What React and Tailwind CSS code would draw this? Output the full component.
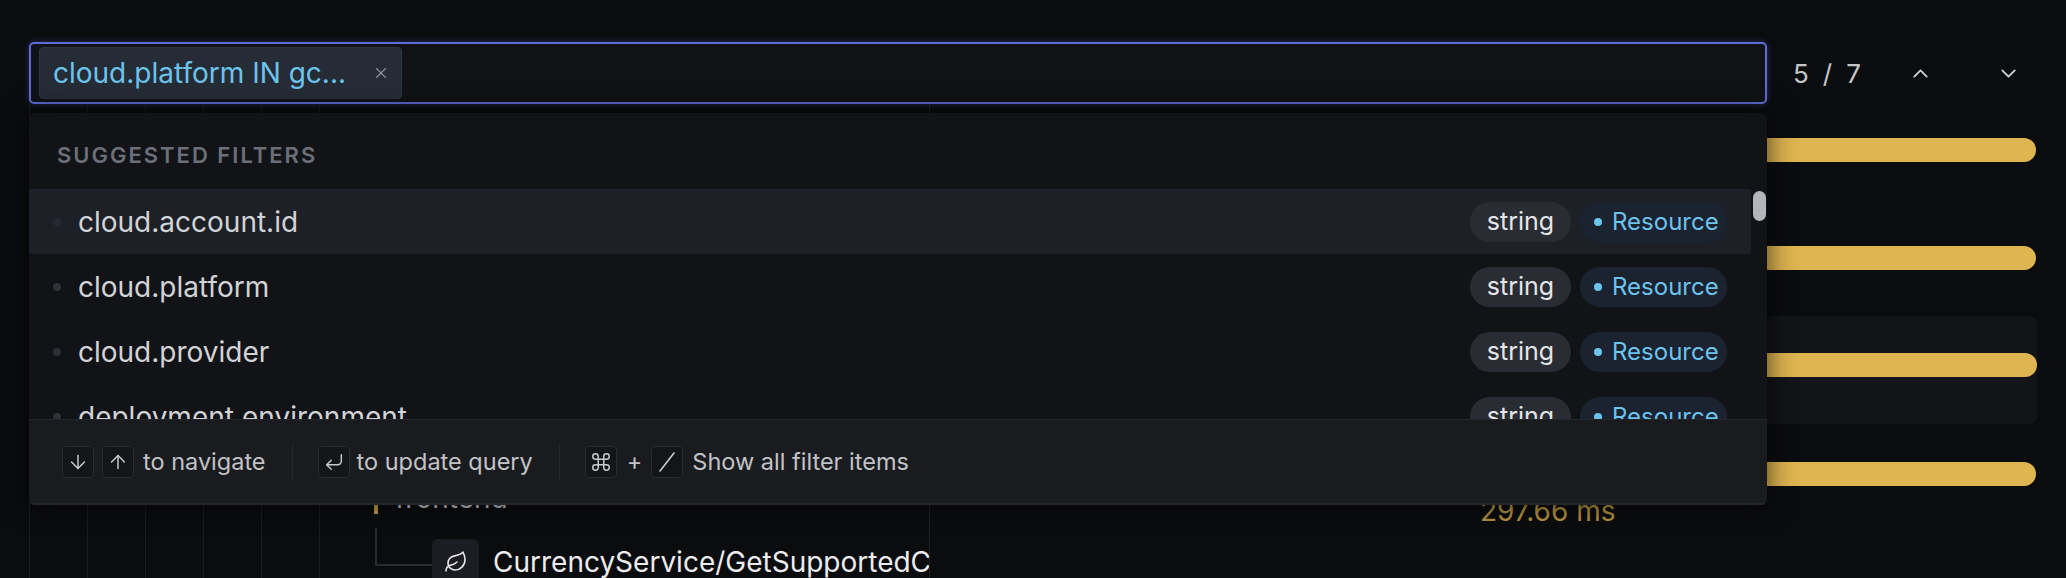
import { ArrowDown, ArrowUp, ChevronDown, ChevronUp, Command, CornerDownLeft, Leaf, X } from "lucide-react";

const suggestions = [
  { key: "cloud.account.id", type: "string", tag: "Resource" },
  { key: "cloud.platform", type: "string", tag: "Resource" },
  { key: "cloud.provider", type: "string", tag: "Resource" },
  { key: "deployment.environment", type: "string", tag: "Resource" },
];

function Kbd({ children }) {
  return (
    <span className="flex h-[32px] w-[32px] items-center justify-center rounded-[4px] border border-[#2a2b31] bg-[#141519] text-[#c9cacf]">
      {children}
    </span>
  );
}

function SlashIcon() {
  return (
    <svg width="24" height="24" viewBox="0 0 24 24" fill="none" stroke="currentColor" strokeWidth="1.6" strokeLinecap="round">
      <path d="M5 21 L19 3" />
    </svg>
  );
}

function Bar() {
  return <div className="ml-[550px] mr-[30px] h-[24px] rounded-full bg-[#deb550]" />;
}

export default function App() {
  return (
    <div className="relative flex h-[578px] w-[2066px] flex-col overflow-hidden bg-[#0b0c0e] font-['Inter',sans-serif]">
      {/* Search bar */}
      <div className="mt-[42px] flex h-[62px] items-center pl-[29px]">
        <div className="flex h-[62px] w-[1738px] items-center rounded-[5px] border-2 border-[#5d6cd6] bg-[#111216] pl-[8px] shadow-[0_0_6px_rgba(93,108,214,0.35)]">
          <div className="flex h-[52px] w-[363px] items-center rounded-[4px] border border-[#2e3440] bg-[#262c36] pl-[13px]">
            <span className="text-[28px] leading-none text-[#6cc3ec]">cloud.platform IN gc...</span>
            <X className="ml-[26px] text-[#8d929c]" size={18} strokeWidth={1.5} />
          </div>
        </div>
        <div className="ml-[26px] flex items-center gap-[14px] text-[26px] text-[#c4c5c9]">
          <span>5</span>
          <span>/</span>
          <span>7</span>
        </div>
        <ChevronUp className="ml-[47px] text-[#d2d3d7]" size={25} strokeWidth={1.7} />
        <ChevronDown className="ml-[63px] text-[#d2d3d7]" size={25} strokeWidth={1.7} />
      </div>

      {/* Trace view underneath */}
      <div className="flex flex-1">
        <div className="flex w-[930px] flex-col border-r border-[#1f2025]">
          <div className="flex flex-1 overflow-hidden">
            <div className="ml-[29px] flex">
              <div className="w-[58px] border-l border-[#1b1c21]" />
              <div className="w-[58px] border-l border-[#1b1c21]" />
              <div className="w-[58px] border-l border-[#1b1c21]" />
              <div className="w-[58px] border-l border-[#1b1c21]" />
              <div className="w-[58px] border-l border-[#1b1c21]" />
              <div className="w-[55px] border-l border-[#1b1c21]" />
            </div>
            <div className="flex flex-col pt-[374px]">
              <div className="flex h-[40px] items-center">
                <div className="h-[32px] w-[4px] bg-[#c9a244]" />
                <span className="ml-[17px] text-[28px] text-[#c8c9cd]">frontend</span>
              </div>
              <div className="flex items-start">
                <div className="ml-[1px] mt-[10px] h-[38px] w-[57px] border-b-2 border-l-2 border-[#2a2b31]" />
                <div className="mt-[21px] flex items-center">
                  <div className="flex h-[46px] w-[47px] items-center justify-center rounded-md bg-[#1c1d22] text-[#e6e6e8]">
                    <Leaf size={24} strokeWidth={1.6} />
                  </div>
                  <span className="ml-[14px] whitespace-nowrap text-[28px] text-[#ececee]">CurrencyService/GetSupportedCurrencies</span>
                </div>
              </div>
            </div>
          </div>
          <div className="h-[9px] bg-[#060607]" />
        </div>
        <div className="flex flex-1 flex-col">
          <div className="h-[108px] pt-[34px]">
            <Bar />
          </div>
          <div className="h-[104px] pt-[34px]">
            <Bar />
          </div>
          <div className="ml-[546px] mr-[29px] h-[108px] rounded-lg bg-[#131418] pt-[37px]">
            <div className="ml-[4px] h-[24px] rounded-full bg-[#deb550]" />
          </div>
          <div className="pt-[38px]">
            <Bar />
            <div className="ml-[550px] mt-[4px] text-[28px] text-[#b8953f]">297.66 ms</div>
          </div>
        </div>
      </div>

      {/* Suggestions dropdown */}
      <div className="absolute left-[29px] top-[113px] flex h-[392px] w-[1738px] flex-col overflow-hidden rounded-md bg-[#121317] shadow-[0_0_28px_rgba(0,0,0,0.7)]">
        <div className="h-[76px] pl-[28px] pt-[30px] text-[22px] font-semibold leading-[24px] tracking-[2px] text-[#6b6f7a]">
          SUGGESTED FILTERS
        </div>
        <div className="flex h-[230px] overflow-hidden">
          <div className="flex w-[1722px] flex-col">
            {suggestions.map((s, i) => (
              <div
                key={s.key}
                className={`flex h-[65px] shrink-0 items-center rounded-[3px] pl-[24px] pr-[24px] ${i === 0 ? "bg-[#1e2028]" : ""}`}
              >
                <span className={`h-[8px] w-[8px] rounded-full ${i === 0 ? "bg-[#262831]" : "bg-[#2e3037]"}`} />
                <span className="ml-[17px] text-[28px] text-[#d2d3d7]">{s.key}</span>
                <div className="ml-auto flex items-center gap-[9px]">
                  <span className="flex h-[40px] w-[101px] items-center justify-center rounded-full bg-[#2a2c33] text-[25px] text-[#e4e5e8]">
                    {s.type}
                  </span>
                  <span className="flex h-[40px] w-[147px] items-center rounded-full bg-[#1b2230] pl-[14px] text-[24px] text-[#6cc3ec]">
                    <span className="h-[8px] w-[8px] rounded-full bg-[#6cc3ec]" />
                    <span className="ml-[10px]">{s.tag}</span>
                  </span>
                </div>
              </div>
            ))}
          </div>
          <div className="flex w-[16px] justify-center pt-[2px]">
            <div className="h-[30px] w-[13px] rounded-full bg-[#b4b5bb]" />
          </div>
        </div>
        <div className="flex h-[86px] items-center border-b-2 border-t border-[#25262c] bg-[#1a1b1f] pl-[33px] text-[23.5px] text-[#c2c3c7]">
          <Kbd>
            <ArrowDown size={22} strokeWidth={1.6} />
          </Kbd>
          <span className="ml-[8px]">
            <Kbd>
              <ArrowUp size={22} strokeWidth={1.6} />
            </Kbd>
          </span>
          <span className="ml-[9px]">to navigate</span>
          <span className="ml-[26px] h-[37px] w-[1px] bg-[#26272c]" />
          <span className="ml-[25px]">
            <Kbd>
              <CornerDownLeft size={22} strokeWidth={1.6} />
            </Kbd>
          </span>
          <span className="ml-[7px]">to update query</span>
          <span className="ml-[26px] h-[37px] w-[1px] bg-[#26272c]" />
          <span className="ml-[25px]">
            <Kbd>
              <Command size={22} strokeWidth={1.6} />
            </Kbd>
          </span>
          <span className="ml-[10px]">+</span>
          <span className="ml-[9px]">
            <Kbd>
              <SlashIcon />
            </Kbd>
          </span>
          <span className="ml-[9px]">Show all filter items</span>
        </div>
      </div>
    </div>
  );
}
